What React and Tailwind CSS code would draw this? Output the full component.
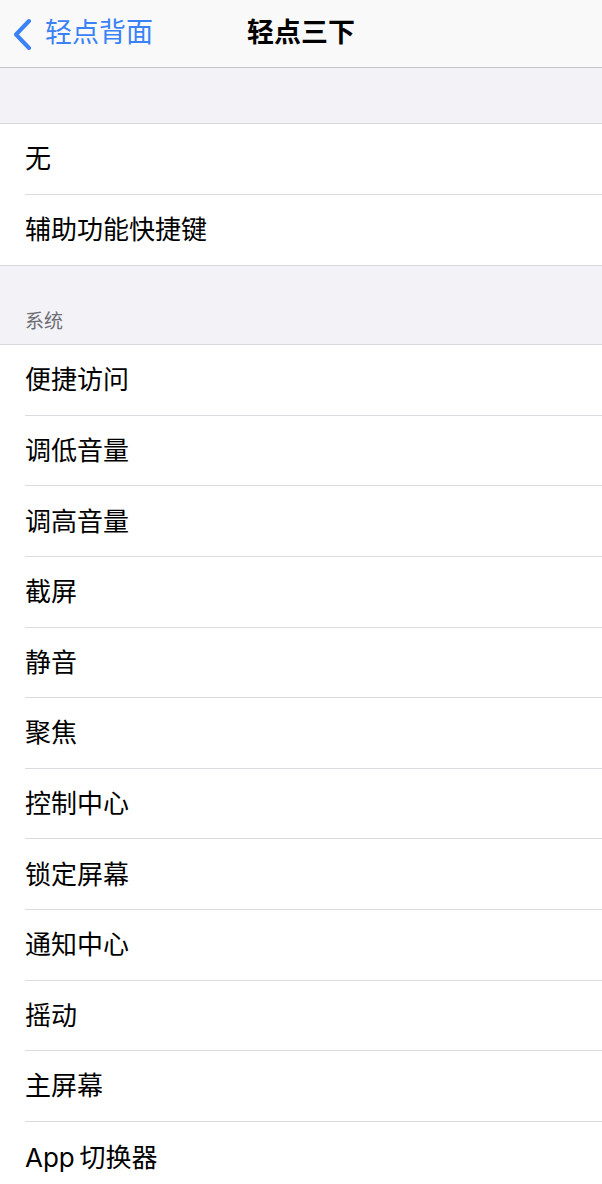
import React from 'react';

const shortcuts = ['无', '辅助功能快捷键'];

const systemActions = [
  '便捷访问',
  '调低音量',
  '调高音量',
  '截屏',
  '静音',
  '聚焦',
  '控制中心',
  '锁定屏幕',
  '通知中心',
  '摇动',
  '主屏幕',
  'App\u2009切换器',
];

const font = { fontFamily: '"Inter", "Noto Sans CJK SC", sans-serif' };

const Row = ({ label, last }) => (
  <div className="h-[70.6px] pl-[25px] flex flex-col bg-white">
    <div className="flex-1 flex items-center text-[26px] text-black">{label}</div>
    {!last && <div className="h-px bg-[#dcdce0]" />}
  </div>
);

const Group = ({ items }) => (
  <div className="border-y border-[#d8d8dc] bg-white">
    {items.map((item, i) => (
      <Row key={item} label={item} last={i === items.length - 1} />
    ))}
  </div>
);

const App = () => {
  return (
    <div className="w-[602px] h-[1184px] overflow-hidden bg-[#f2f2f7]" style={font}>
      {/* nav bar */}
      <div className="h-[68px] bg-[#f9f9f9] border-b border-[#c4c4c7] relative flex items-center">
        <div className="flex items-center pl-[12px] text-[#3a82f6]">
          <svg width="22" height="32" viewBox="0 0 22 32" className="mr-[11px]">
            <polyline
              points="17,3 4,16.5 17,30"
              fill="none"
              stroke="currentColor"
              strokeWidth="4"
              strokeLinecap="round"
              strokeLinejoin="round"
            />
          </svg>
          <span className="text-[27px]">轻点背面</span>
        </div>
        <div className="absolute left-0 right-0 text-center text-[27px] font-bold text-black pointer-events-none">
          轻点三下
        </div>
      </div>

      <div className="h-[55px]" />
      <Group items={shortcuts} />

      <div className="h-[78px] flex items-end pl-[25px] pb-[8px]">
        <span className="text-[19px] text-[#6d6d72]">系统</span>
      </div>
      <Group items={systemActions} />
    </div>
  );
};

export default App;
